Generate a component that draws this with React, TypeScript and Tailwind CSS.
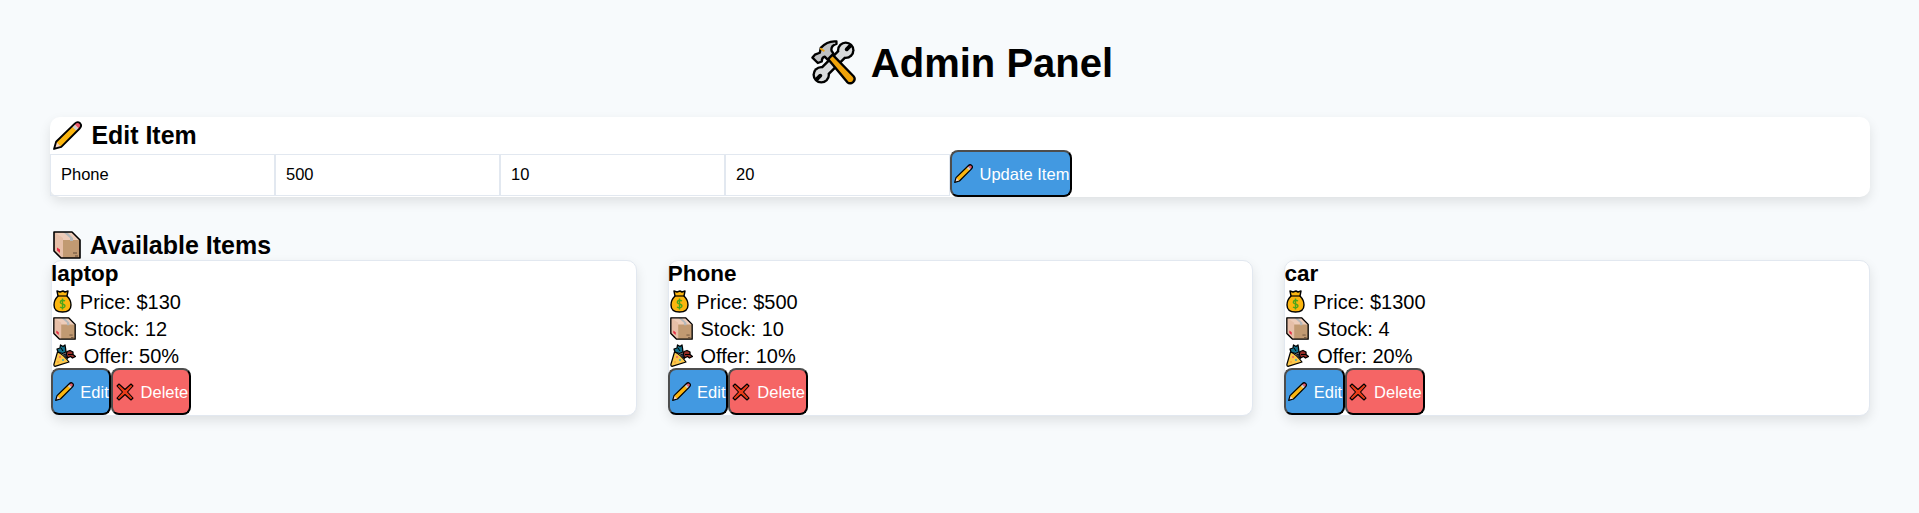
import React, { useState } from "react";

type IconProps = { className: string };

function Tools({ className }: IconProps) {
  return (
    <svg viewBox="0 0 46 46" className={className} strokeLinecap="round" strokeLinejoin="round">
      <g fill="#000">
        <circle cx="35.500" cy="10.500" r="9" />
        <circle cx="10.500" cy="35.500" r="9" />
        <path d="M12 34 L34 12" stroke="#000" strokeWidth="12" />
      </g>
      <g fill="#d9dbdc">
        <circle cx="35.500" cy="10.500" r="6.600" />
        <circle cx="10.500" cy="35.500" r="6.600" />
        <path d="M12 34 L34 12" stroke="#d9dbdc" strokeWidth="7" />
      </g>
      <path d="M36.500 9.500 L40 6 M9.500 36.500 L6 40" stroke="#000" strokeWidth="4" />
      <path d="M17 19 L22 15 L43.500 37 Q46 40 43 43 Q40 45.500 37 43 Z" fill="#f0a30a" stroke="#000" strokeWidth="2.400" />
      <path d="M10 8 Q17 .5 26 1.500 L26 4 Q20 6 21 11 L23 14 L17 20 L14 17 Q11 18 11 22 L7 23.500 L1.500 18 L4 15 L9 13 Z" fill="#bfc1c3" stroke="#000" strokeWidth="2.400" />
      <path d="M10 9 L13 11" stroke="#f0a30a" strokeWidth="2" />
    </svg>
  );
}

function Pencil({ className }: IconProps) {
  return (
    <svg viewBox="0 0 28 28" className={className} strokeLinejoin="round">
      <path d="M1 27 L3 20 L20 3 L25 8 L8 25 Z" fill="#fcb60f" />
      <path d="M1 27 L3 20 L8 25 Z" fill="#f5d5c4" />
      <path d="M18 5 L20 3 L25 8 L23 10 Z" fill="#d0cfce" />
      <path d="M20.500 3 Q23 0 26 2 Q28 5 25 7.500 Z" fill="#ea5a6b" />
      <path d="M1 27 L3 20 L21 2.500 Q23.500 0 26 2 Q28.500 4.500 25.500 7.500 L8 25 Z" fill="none" stroke="#000" strokeWidth="1.800" />
    </svg>
  );
}

function Box({ className }: IconProps) {
  return (
    <svg viewBox="0 0 28 28" className={className} strokeLinejoin="round">
      <path d="M1 1 H19 L27 9 V27 H8 L1 20 Z" fill="#c19a72" />
      <path d="M1 1 H19 L27 9 H10 Z" fill="#edccb9" />
      <path d="M1 1 L10 7 V27 H8 L1 20 Z" fill="#e6bfa8" />
      <path d="M10 1 H14 L20 7 V10 H17 V7 Z" fill="#b5b8b9" />
      <path d="M4 16.500 L7 18.500 V22 L4 19.500 Z" fill="#e72d45" />
      <path d="M20 22 H24 M22 25 H25" stroke="#4d3929" strokeWidth=".8" />
      <path d="M1 1 H19 L27 9 V27 H8 L1 20 Z" fill="none" stroke="#000" strokeWidth="1.600" />
    </svg>
  );
}

function Money({ className }: IconProps) {
  return (
    <svg viewBox="0 0 19 23" className={className} strokeLinejoin="round">
      <path d="M4 1 L7 2 L10 1 L12 2 L15 1 L14 6 Q18 10 18 15 Q18 22 9.500 22 Q1 22 1 15 Q1 10 5 6 Z" fill="#fcb60f" stroke="#000" strokeWidth="1.400" />
      <path d="M4.500 6 H14.500" stroke="#000" strokeWidth="1.200" />
      <path d="M12 11 Q9.500 9.500 7.700 11 Q6.500 13.500 9.500 14 Q13 15 11.500 17 Q9.500 18.500 7 17 M9.500 8.500 V19.500" fill="none" stroke="#4aa51c" strokeWidth="1.400" />
    </svg>
  );
}

function Party({ className }: IconProps) {
  return (
    <svg viewBox="0 0 23 23" className={className} strokeLinejoin="round">
      <path d="M4.500 8 Q10 10 16 18 L2 22.400 Q.5 22 1 20 Z" fill="#fcc84a" stroke="#000" strokeWidth="1.200" />
      <path d="M4 5 L7 4 L7.500 1 L10 2.500 L12 1 L12.500 4 L13 8 L9.500 9.500 L5 8 Z" fill="#13708a" stroke="#000" strokeWidth="1.300" />
      <path d="M8 4 L10 7" stroke="#000" />
      <path d="M13 11 L14 7.500 L17 6.500 L20 8 L20 10.500 L22.500 12.500 L19.500 14 L17.500 12.500 L14.500 14 Z" fill="#982e28" stroke="#000" strokeWidth="1.300" />
      <path d="M10.500 10 L13.500 10 L14.500 14.500 Z" fill="#263c6a" stroke="#000" />
      <path d="M15 10.500 L20 10.500" stroke="#000" />
      <circle cx="7" cy="13" r=".9" fill="#ea5a6b" />
      <circle cx="10" cy="16" r=".9" fill="#29a8c5" />
      <circle cx="5" cy="18" r=".7" fill="#ef7d25" />
    </svg>
  );
}

function Cross({ className }: IconProps) {
  return (
    <svg viewBox="0 0 18 18" className={className} strokeLinejoin="round">
      <path d="M1 3 L3 1 L9 6.500 L15 1 L17 3 L11.500 9 L17 15 L15 17 L9 11.500 L3 17 L1 15 L6.500 9 Z" fill="#ea3c18" stroke="#000" strokeWidth="1.100" />
    </svg>
  );
}

const panel = "bg-white rounded-[10px] shadow-[0_5px_12px_rgba(0,0,0,0.1)]";
const button = "flex h-[47px] items-center rounded-lg border-2 border-t-[#4d4d4d] border-l-[#4d4d4d] border-r-black border-b-black text-[16.5px] text-white whitespace-nowrap";

const items = [
  { name: "laptop", price: 130, stock: 12, offer: 50 },
  { name: "Phone", price: 500, stock: 10, offer: 10 },
  { name: "car", price: 1300, stock: 4, offer: 20 },
];

export default function App() {
  const [form, setForm] = useState(["Phone", "500", "10", "20"]);
  return (
    <main className="min-h-[513px] bg-[#f7fafc] pt-[40px] pr-[49px] pl-[50px] font-['Liberation_Sans',Arial,sans-serif] text-black">
      <h1 className="flex h-[46px] items-center justify-center pl-[5px] text-[40px] font-bold">
        <Tools className="-mt-px -ml-px mr-[15px] h-[45px] w-[45px]" />
        Admin Panel
      </h1>

      <section className={`mt-[31px] h-20 ${panel}`}>
        <h2 className="flex h-[33px] items-center pt-1 pl-[3px] text-[24.9px] font-bold">
          <Pencil className="mr-[9.5px] h-[29px] w-[29px]" />
          Edit Item
        </h2>
        <div className="flex items-end">
          {form.map((value, i) => (
            <input
              key={i}
              value={value}
              onChange={(e) => setForm(form.map((v, n) => (n === i ? e.target.value : v)))}
              className="mb-px h-[42px] w-[225px] border border-[#e2e8f0] px-2.5 pb-[2px] text-[16.5px] outline-none"
            />
          ))}
          <button className={`w-[122px] bg-[#4299e1] ${button}`}>
            <Pencil className="mr-[6.5px] ml-[2px] h-[19px] w-[19px] shrink-0" />
            <span className="pt-px">Update Item</span>
          </button>
        </div>
      </section>

      <h2 className="mt-[33px] flex h-[30px] items-center pt-[2px] pl-[3px] text-[25px] font-bold">
        <span className="mr-[9px] pb-[2px]">
          <Box className="h-[28px] w-[28px]" />
        </span>
        Available Items
      </h2>
      <section className="ml-[0.8px] grid grid-cols-3 gap-[31px]">
        {items.map((item) => (
          <article key={item.name} className={`h-[156px] border border-[#e2e8f0] ${panel}`}>
            <h3 className="-ml-[0.7px] h-[27px] text-[22.5px] leading-[25px] font-bold">{item.name}</h3>
            <p className="flex h-[27px] items-center pl-px text-[20px]">
              <Money className="mr-2 h-[23px] w-[19px]" />
              Price: ${item.price}
            </p>
            <p className="flex h-[27px] items-center pl-px text-[20px]">
              <Box className="mr-2 h-[23px] w-[23px]" />
              Stock: {item.stock}
            </p>
            <p className="flex h-[27px] items-center pl-px text-[20px]">
              <Party className="mr-2 h-[23px] w-[23px]" />
              Offer: {item.offer}%
            </p>
            <div className="-mt-px -ml-px flex">
              <button className={`w-[60.3px] bg-[#4299e1] ${button}`}>
                <Pencil className="mr-[6.5px] ml-[2px] h-[19px] w-[19px] shrink-0" />
                <span className="pt-px">Edit</span>
              </button>
              <button className={`w-[80px] bg-[#f56565] ${button}`}>
                <Cross className="mr-[7px] ml-[2.5px] h-[18px] w-[18px] shrink-0" />
                <span className="pt-px">Delete</span>
              </button>
            </div>
          </article>
        ))}
      </section>
    </main>
  );
}
